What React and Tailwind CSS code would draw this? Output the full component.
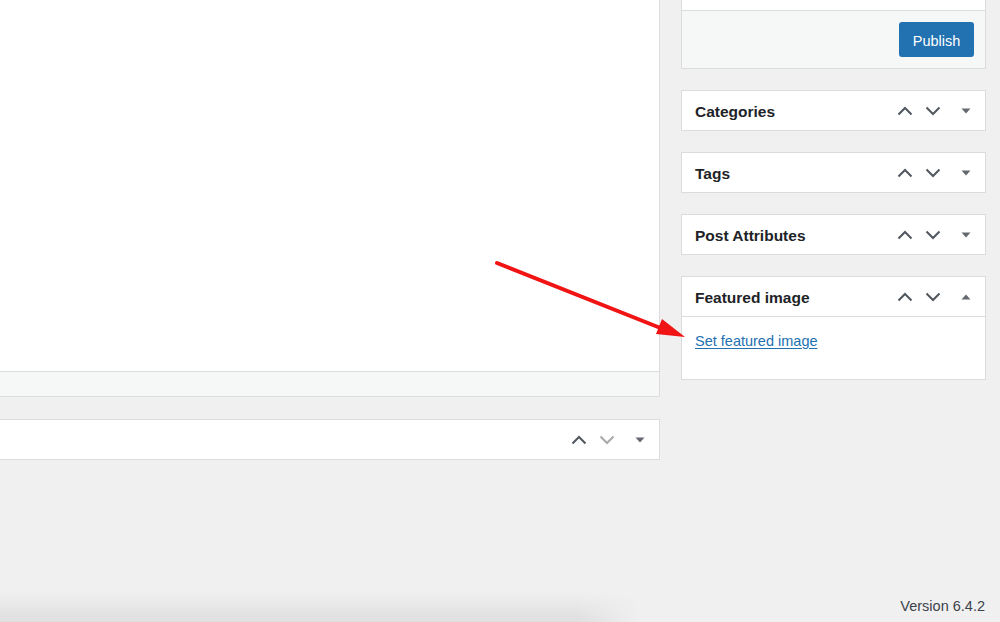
import React from "react";

const ChevronUp = ({ color = "#50575e" }) => (
  <svg width="16" height="10" viewBox="0 0 16 10" fill="none">
    <path d="M1.5 8.5L8 2L14.5 8.5" stroke={color} strokeWidth="2" />
  </svg>
);
const ChevronDown = ({ color = "#50575e" }) => (
  <svg width="16" height="10" viewBox="0 0 16 10" fill="none">
    <path d="M1.5 1.5L8 8L14.5 1.5" stroke={color} strokeWidth="2" />
  </svg>
);
const Tri = ({ up = false }) => (
  <svg width="10" height="6" viewBox="0 0 10 6">
    {up ? (
      <path d="M0.5 5.5L5 0.5L9.5 5.5Z" fill="#646970" />
    ) : (
      <path d="M0.5 0.5L9.5 0.5L5 5.5Z" fill="#646970" />
    )}
  </svg>
);

function Controls({ up = false, downColor = "#50575e" }) {
  return (
    <div className="flex items-center h-full pt-[1px]">
      <div className="w-[28px] h-full flex items-center justify-center">
        <ChevronUp />
      </div>
      <div className="w-[28px] h-full flex items-center justify-center">
        <ChevronDown color={downColor} />
      </div>
      <div className="w-[38px] h-full flex items-center justify-center">
        <Tri up={up} />
      </div>
    </div>
  );
}

function Postbox({ title, open = false, children }) {
  return (
    <div className="bg-white border border-[#dcdcde] mb-[21px]">
      <div className={`flex items-center justify-between pl-[13px] ${open ? "border-b border-[#dcdcde] h-[40px]" : "h-[39px]"}`}>
        <h2 className="text-[15.5px] font-bold text-[#1d2327] pt-[2px]">{title}</h2>
        <Controls up={open} />
      </div>
      {children}
    </div>
  );
}

export default function App() {
  return (
    <div
      className="relative w-[1000px] h-[622px] bg-[#f0f0f1] overflow-hidden flex flex-col"
      style={{ fontFamily: '"Liberation Sans", Arial, sans-serif' }}
    >
      <div className="flex-1 flex items-start gap-[21px]">
        {/* Left column */}
        <div className="w-[660px]">
          <div className="h-[371px] bg-white border-r border-[#dcdcde]" />
          <div className="h-[26px] bg-[#f6f7f7] border border-l-0 border-[#dcdcde]" />
          <div className="mt-[22px] h-[41px] bg-white border border-l-0 border-[#dcdcde] flex justify-end">
            <Controls downColor="#a7aaad" />
          </div>
        </div>

        {/* Right column */}
        <div className="w-[305px]">
          <div className="bg-white border border-t-0 border-[#dcdcde] mb-[21px]">
            <div className="h-[10px] bg-white" />
            <div className="h-[58px] border-t border-[#dcdcde] bg-[#f6f7f7] flex items-center justify-end pr-[11px]">
              <button className="w-[75px] h-[35px] bg-[#2271b1] rounded-[3px] text-white text-[14.5px] leading-none pt-[3px]">
                Publish
              </button>
            </div>
          </div>
          <Postbox title="Categories" />
          <Postbox title="Tags" />
          <Postbox title="Post Attributes" />
          <Postbox title="Featured image" open>
            <div className="h-[62px] pl-[13px] pt-[12px]">
              <a href="#" className="text-[14.5px] leading-[20px] text-[#2271b1] underline underline-offset-2">
                Set featured image
              </a>
            </div>
          </Postbox>
        </div>
      </div>

      {/* Footer */}
      <div className="h-[34px] flex items-center justify-between relative">
        <div className="absolute left-0 bottom-0 w-[640px] h-[30px] bg-[linear-gradient(to_bottom,rgba(0,0,0,0)_0%,rgba(0,0,0,0.07)_100%)] [mask-image:linear-gradient(to_right,black_90%,transparent)]" />
        <div />
        <p className="pr-[15px] pt-[4px] text-[14.5px] text-[#3c434a]">Version 6.4.2</p>
      </div>

      {/* Annotation arrow */}
      <svg className="absolute inset-0 pointer-events-none" width="1000" height="622" viewBox="0 0 1000 622">
        <line x1="497" y1="263" x2="663" y2="329" stroke="#f01414" strokeWidth="4" strokeLinecap="round" />
        <polygon points="685,337 656,334 662,319" fill="#f01414" />
      </svg>
    </div>
  );
}
